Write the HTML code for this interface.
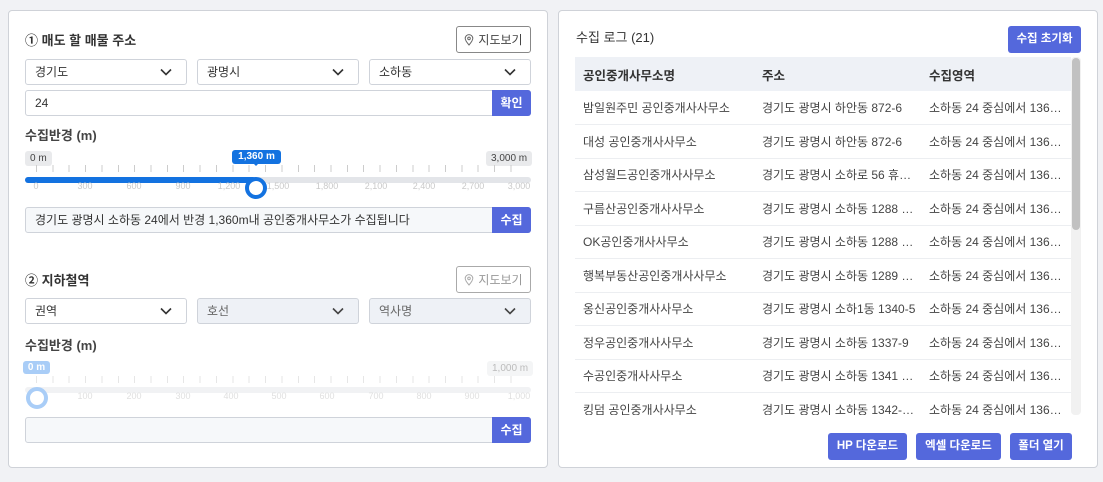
<!DOCTYPE html>
<html><head><meta charset="utf-8"><style>
*{box-sizing:border-box;margin:0;padding:0}
body{width:1103px;height:482px;background:#f1f2f5;font-family:"Liberation Sans","Noto Sans CJK KR",sans-serif;color:#333;font-size:12px;position:relative;overflow:hidden}
.a{position:absolute}
.panel{position:absolute;background:#fff;border:1px solid #cfd2d8;border-radius:4px}
.title{font-size:13px;font-weight:bold;color:#333}
.mapbtn{position:absolute;border:1px solid #888;border-radius:3px;background:#fff;font-size:12px;color:#444;display:flex;align-items:center;justify-content:center;gap:4px}
.sel{position:absolute;border:1px solid #cfd3da;border-radius:3px;background:#fff;height:26px;width:162px;padding-left:9px;line-height:24px;font-size:12px;color:#333}
.sel.dis{background:#eef1f6;color:#666}
.sel svg{position:absolute;right:14px;top:8px}
.inp{position:absolute;left:25px;width:506px;height:26px;border:1px solid #cfd3da;border-radius:3px;background:#fff;padding-left:9px;line-height:24px;font-size:12px}
.bb{position:absolute;right:-1px;top:-1px;height:26px;width:39px;background:#5468dc;color:#fff;font-weight:bold;font-size:12px;text-align:center;line-height:26px;border-radius:0 3px 3px 0}
.lbl{font-size:13px;font-weight:bold;color:#444}
.chip{position:absolute;background:#e9eaec;border-radius:3px;font-size:10px;color:#444;padding:0 5px;height:15px;line-height:15px}
.ticks{position:absolute;left:36px;width:491px;height:7px;background:repeating-linear-gradient(90deg,#ccc 0,#ccc 1px,transparent 1px,transparent 16.36px)}
.tl{position:absolute;font-size:9px;color:#c9c9c9;transform:translateX(-50%)}
.btn{position:absolute;background:#5468dc;color:#fff;font-weight:bold;font-size:11.5px;text-align:center;border-radius:3px;line-height:27px;height:27px}
table{border-collapse:collapse;width:496px;font-size:12px}
th{background:#eef1f6;height:34px;text-align:left;font-weight:bold;font-size:12.5px;color:#333;padding-left:8px}
td{height:33.5px;border-bottom:1px solid #eceef1;padding-left:8px;color:#444;white-space:nowrap}
</style></head><body>

<div class="panel" style="left:8px;top:10px;width:540px;height:458px"></div>
<div class="panel" style="left:558px;top:10px;width:540px;height:458px"></div>

<!-- section 1 -->
<div class="a title" style="left:25px;top:30px">① 매도 할 매물 주소</div>
<div class="mapbtn" style="left:456px;top:26px;width:75px;height:27px"><svg width="10" height="12" viewBox="0 0 10 12"><path d="M5 11C2 7.5 1.2 6 1.2 4.4A3.8 3.8 0 0 1 8.8 4.4C8.8 6 8 7.5 5 11Z" fill="none" stroke="#666" stroke-width="1"/><circle cx="5" cy="4.4" r="1.3" fill="none" stroke="#666"/></svg>지도보기</div>
<div class="sel" style="left:25px;top:59px">경기도<svg width="12" height="8" viewBox="0 0 12 8"><path d="M1 1.5L6 6.5L11 1.5" fill="none" stroke="#333" stroke-width="1.6"/></svg></div>
<div class="sel" style="left:197px;top:59px">광명시<svg width="12" height="8" viewBox="0 0 12 8"><path d="M1 1.5L6 6.5L11 1.5" fill="none" stroke="#333" stroke-width="1.6"/></svg></div>
<div class="sel" style="left:369px;top:59px">소하동<svg width="12" height="8" viewBox="0 0 12 8"><path d="M1 1.5L6 6.5L11 1.5" fill="none" stroke="#333" stroke-width="1.6"/></svg></div>
<div class="inp" style="top:90px">24<div class="bb">확인</div></div>
<div class="a lbl" style="left:25px;top:125px">수집반경 (m)</div>
<div class="chip" style="left:25px;top:151px">0 m</div>
<div class="chip" style="left:486px;top:151px">3,000 m</div>
<div class="a" style="left:232px;top:150px;width:49px;height:14px;background:#1372e0;color:#fff;border-radius:3px;font-size:10px;font-weight:bold;text-align:center;line-height:14px">1,360 m</div>
<div class="a" style="left:253px;top:163px;border:3px solid transparent;border-top-color:#1372e0"></div>
<div class="ticks" style="top:165px"></div>
<div class="a" style="left:25px;top:177px;width:506px;height:6px;background:#e3e5e9;border-radius:3px"></div>
<div class="a" style="left:25px;top:177px;width:231px;height:6px;background:#1372e0;border-radius:3px"></div>
<div class="tl" style="left:36px;top:181px">0</div><div class="tl" style="left:85px;top:181px">300</div><div class="tl" style="left:134px;top:181px">600</div><div class="tl" style="left:183px;top:181px">900</div><div class="tl" style="left:229px;top:181px">1,200</div><div class="tl" style="left:278px;top:181px">1,500</div><div class="tl" style="left:327px;top:181px">1,800</div><div class="tl" style="left:376px;top:181px">2,100</div><div class="tl" style="left:424px;top:181px">2,400</div><div class="tl" style="left:473px;top:181px">2,700</div><div class="tl" style="left:519px;top:181px">3,000</div>
<div class="a" style="left:245px;top:177px;width:22px;height:22px;border:4px solid #1372e0;border-radius:50%;background:#fff"></div>
<div class="inp" style="top:207px;background:#f6f8fa">경기도 광명시 소하동 24에서 반경 1,360m내 공인중개사무소가 수집됩니다<div class="bb">수집</div></div>

<!-- section 2 -->
<div class="a title" style="left:25px;top:270px">② 지하철역</div>
<div class="mapbtn" style="left:456px;top:266px;width:75px;height:27px;color:#999;border-color:#aaa"><svg width="10" height="12" viewBox="0 0 10 12"><path d="M5 11C2 7.5 1.2 6 1.2 4.4A3.8 3.8 0 0 1 8.8 4.4C8.8 6 8 7.5 5 11Z" fill="none" stroke="#aaa" stroke-width="1"/><circle cx="5" cy="4.4" r="1.3" fill="none" stroke="#aaa"/></svg>지도보기</div>
<div class="sel" style="left:25px;top:298px">권역<svg width="12" height="8" viewBox="0 0 12 8"><path d="M1 1.5L6 6.5L11 1.5" fill="none" stroke="#333" stroke-width="1.6"/></svg></div>
<div class="sel dis" style="left:197px;top:298px">호선<svg width="12" height="8" viewBox="0 0 12 8"><path d="M1 1.5L6 6.5L11 1.5" fill="none" stroke="#444" stroke-width="1.6"/></svg></div>
<div class="sel dis" style="left:369px;top:298px">역사명<svg width="12" height="8" viewBox="0 0 12 8"><path d="M1 1.5L6 6.5L11 1.5" fill="none" stroke="#444" stroke-width="1.6"/></svg></div>
<div class="a lbl" style="left:25px;top:335px">수집반경 (m)</div>
<div class="a" style="left:23px;top:361px;width:27px;height:13px;background:#a9cdf7;color:#fff;border-radius:3px;font-size:10px;font-weight:bold;text-align:center;line-height:13px">0 m</div>
<div class="chip" style="left:487px;top:361px;background:#f4f5f6;color:#bbb">1,000 m</div>
<div class="ticks" style="top:376px;opacity:.5"></div>
<div class="a" style="left:25px;top:387px;width:506px;height:6px;background:#f1f2f4;border-radius:3px"></div>
<div class="tl" style="left:85px;top:391px;color:#e0e0e0">100</div><div class="tl" style="left:134px;top:391px;color:#e0e0e0">200</div><div class="tl" style="left:183px;top:391px;color:#e0e0e0">300</div><div class="tl" style="left:231px;top:391px;color:#e0e0e0">400</div><div class="tl" style="left:279px;top:391px;color:#e0e0e0">500</div><div class="tl" style="left:327px;top:391px;color:#e0e0e0">600</div><div class="tl" style="left:376px;top:391px;color:#e0e0e0">700</div><div class="tl" style="left:424px;top:391px;color:#e0e0e0">800</div><div class="tl" style="left:472px;top:391px;color:#e0e0e0">900</div><div class="tl" style="left:519px;top:391px;color:#e0e0e0">1,000</div>
<div class="a" style="left:26px;top:387px;width:22px;height:22px;border:4px solid #a9cdf7;border-radius:50%;background:#fff"></div>
<div class="inp" style="top:417px;background:#f6f8fa"><div class="bb">수집</div></div>

<!-- right -->
<div class="a" style="left:576px;top:27px;font-size:13px;color:#333">수집 로그 (21)</div>
<div class="btn" style="left:1008px;top:26px;width:73px">수집 초기화</div>
<div class="a" style="left:575px;top:57px;width:496px;height:358px;overflow:hidden">
<table>
<colgroup><col style="width:179px"><col style="width:167px"><col></colgroup>
<tr><th>공인중개사무소명</th><th>주소</th><th>수집영역</th></tr>
<tr><td>밤일원주민 공인중개사사무소</td><td>경기도 광명시 하안동 872-6</td><td>소하동 24 중심에서 136…</td></tr>
<tr><td>대성 공인중개사사무소</td><td>경기도 광명시 하안동 872-6</td><td>소하동 24 중심에서 136…</td></tr>
<tr><td>삼성월드공인중개사사무소</td><td>경기도 광명시 소하로 56 휴…</td><td>소하동 24 중심에서 136…</td></tr>
<tr><td>구름산공인중개사사무소</td><td>경기도 광명시 소하동 1288 …</td><td>소하동 24 중심에서 136…</td></tr>
<tr><td>OK공인중개사사무소</td><td>경기도 광명시 소하동 1288 …</td><td>소하동 24 중심에서 136…</td></tr>
<tr><td>행복부동산공인중개사사무소</td><td>경기도 광명시 소하동 1289 …</td><td>소하동 24 중심에서 136…</td></tr>
<tr><td>옹신공인중개사사무소</td><td>경기도 광명시 소하1동 1340-5</td><td>소하동 24 중심에서 136…</td></tr>
<tr><td>정우공인중개사사무소</td><td>경기도 광명시 소하동 1337-9</td><td>소하동 24 중심에서 136…</td></tr>
<tr><td>수공인중개사사무소</td><td>경기도 광명시 소하동 1341 …</td><td>소하동 24 중심에서 136…</td></tr>
<tr><td>킹덤 공인중개사사무소</td><td>경기도 광명시 소하동 1342-…</td><td>소하동 24 중심에서 136…</td></tr>
</table></div>
<div class="a" style="left:1071px;top:57px;width:10px;height:358px;background:#f1f1f1;border-radius:4px"></div>
<div class="a" style="left:1072px;top:58px;width:8px;height:172px;background:#c1c1c1;border-radius:4px"></div>
<div class="btn" style="left:828px;top:433px;width:79px">HP 다운로드</div>
<div class="btn" style="left:916px;top:433px;width:85px">엑셀 다운로드</div>
<div class="btn" style="left:1010px;top:433px;width:62px">폴더 열기</div>
</body></html>
